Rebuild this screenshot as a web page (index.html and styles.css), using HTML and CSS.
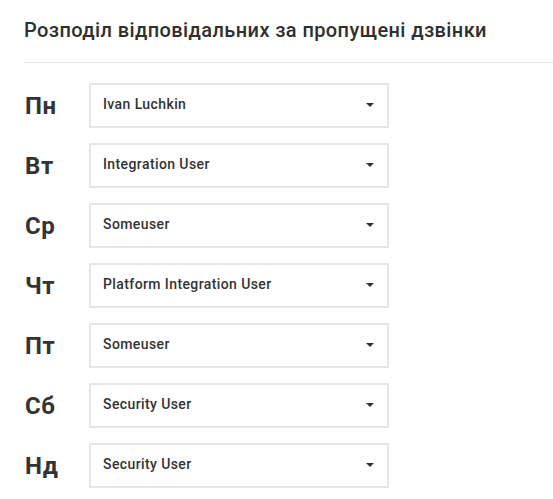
FILE: index.html
```html
<!DOCTYPE html>
<html lang="uk">
<head>
<meta charset="utf-8">
<link rel="stylesheet" href="styles.css">
</head>
<body>
<div class="panel">
  <h2 class="title">Розподіл відповідальних за пропущені дзвінки</h2>
  <div class="rows">
    <div class="row"><span class="day">Пн</span><div class="select"><span>Ivan Luchkin</span><i class="caret"></i></div></div>
    <div class="row"><span class="day">Вт</span><div class="select"><span>Integration User</span><i class="caret"></i></div></div>
    <div class="row"><span class="day">Ср</span><div class="select"><span>Someuser</span><i class="caret"></i></div></div>
    <div class="row"><span class="day">Чт</span><div class="select"><span>Platform Integration User</span><i class="caret"></i></div></div>
    <div class="row"><span class="day">Пт</span><div class="select"><span>Someuser</span><i class="caret"></i></div></div>
    <div class="row"><span class="day">Сб</span><div class="select"><span>Security User</span><i class="caret"></i></div></div>
    <div class="row"><span class="day">Нд</span><div class="select"><span>Security User</span><i class="caret"></i></div></div>
  </div>
</div>
</body>
</html>
```
FILE: styles.css
```css
html, body {
  margin: 0;
  padding: 0;
  background: #fff;
}
body {
  font-family: Roboto, "Liberation Sans", sans-serif;
  color: #333;
}
.panel {
  padding: 17px 0 0 24px;
}
.title {
  margin: 0;
  font-size: 20px;
  font-weight: 500;
  line-height: 26px;
  letter-spacing: 0.4px;
  color: #2f2f2f;
  padding-bottom: 19px;
  border-bottom: 1px solid #ebebeb;
}
.rows {
  display: flex;
  flex-direction: column;
  gap: 15px;
  padding-top: 20px;
}
.row {
  display: flex;
  align-items: center;
}
.day {
  width: 65px;
  font-size: 24px;
  font-weight: 700;
  letter-spacing: 0.6px;
  color: #333;
  line-height: 28px;
  padding-left: 1px;
  box-sizing: border-box;
}
.select {
  width: 300px;
  height: 45px;
  box-sizing: border-box;
  border: 2px solid #e6e6e6;
  display: flex;
  align-items: center;
  justify-content: space-between;
  padding: 0 12px 0 12px;
  font-size: 14px;
  font-weight: 500;
  letter-spacing: 0.4px;
  color: #333;
}
.select span {
  margin-top: -3px;
}
.caret {
  width: 0;
  height: 0;
  border-left: 4px solid transparent;
  border-right: 4px solid transparent;
  border-top: 4px solid #333;
  margin-right: 1px;
  margin-top: -2px;
}
```
